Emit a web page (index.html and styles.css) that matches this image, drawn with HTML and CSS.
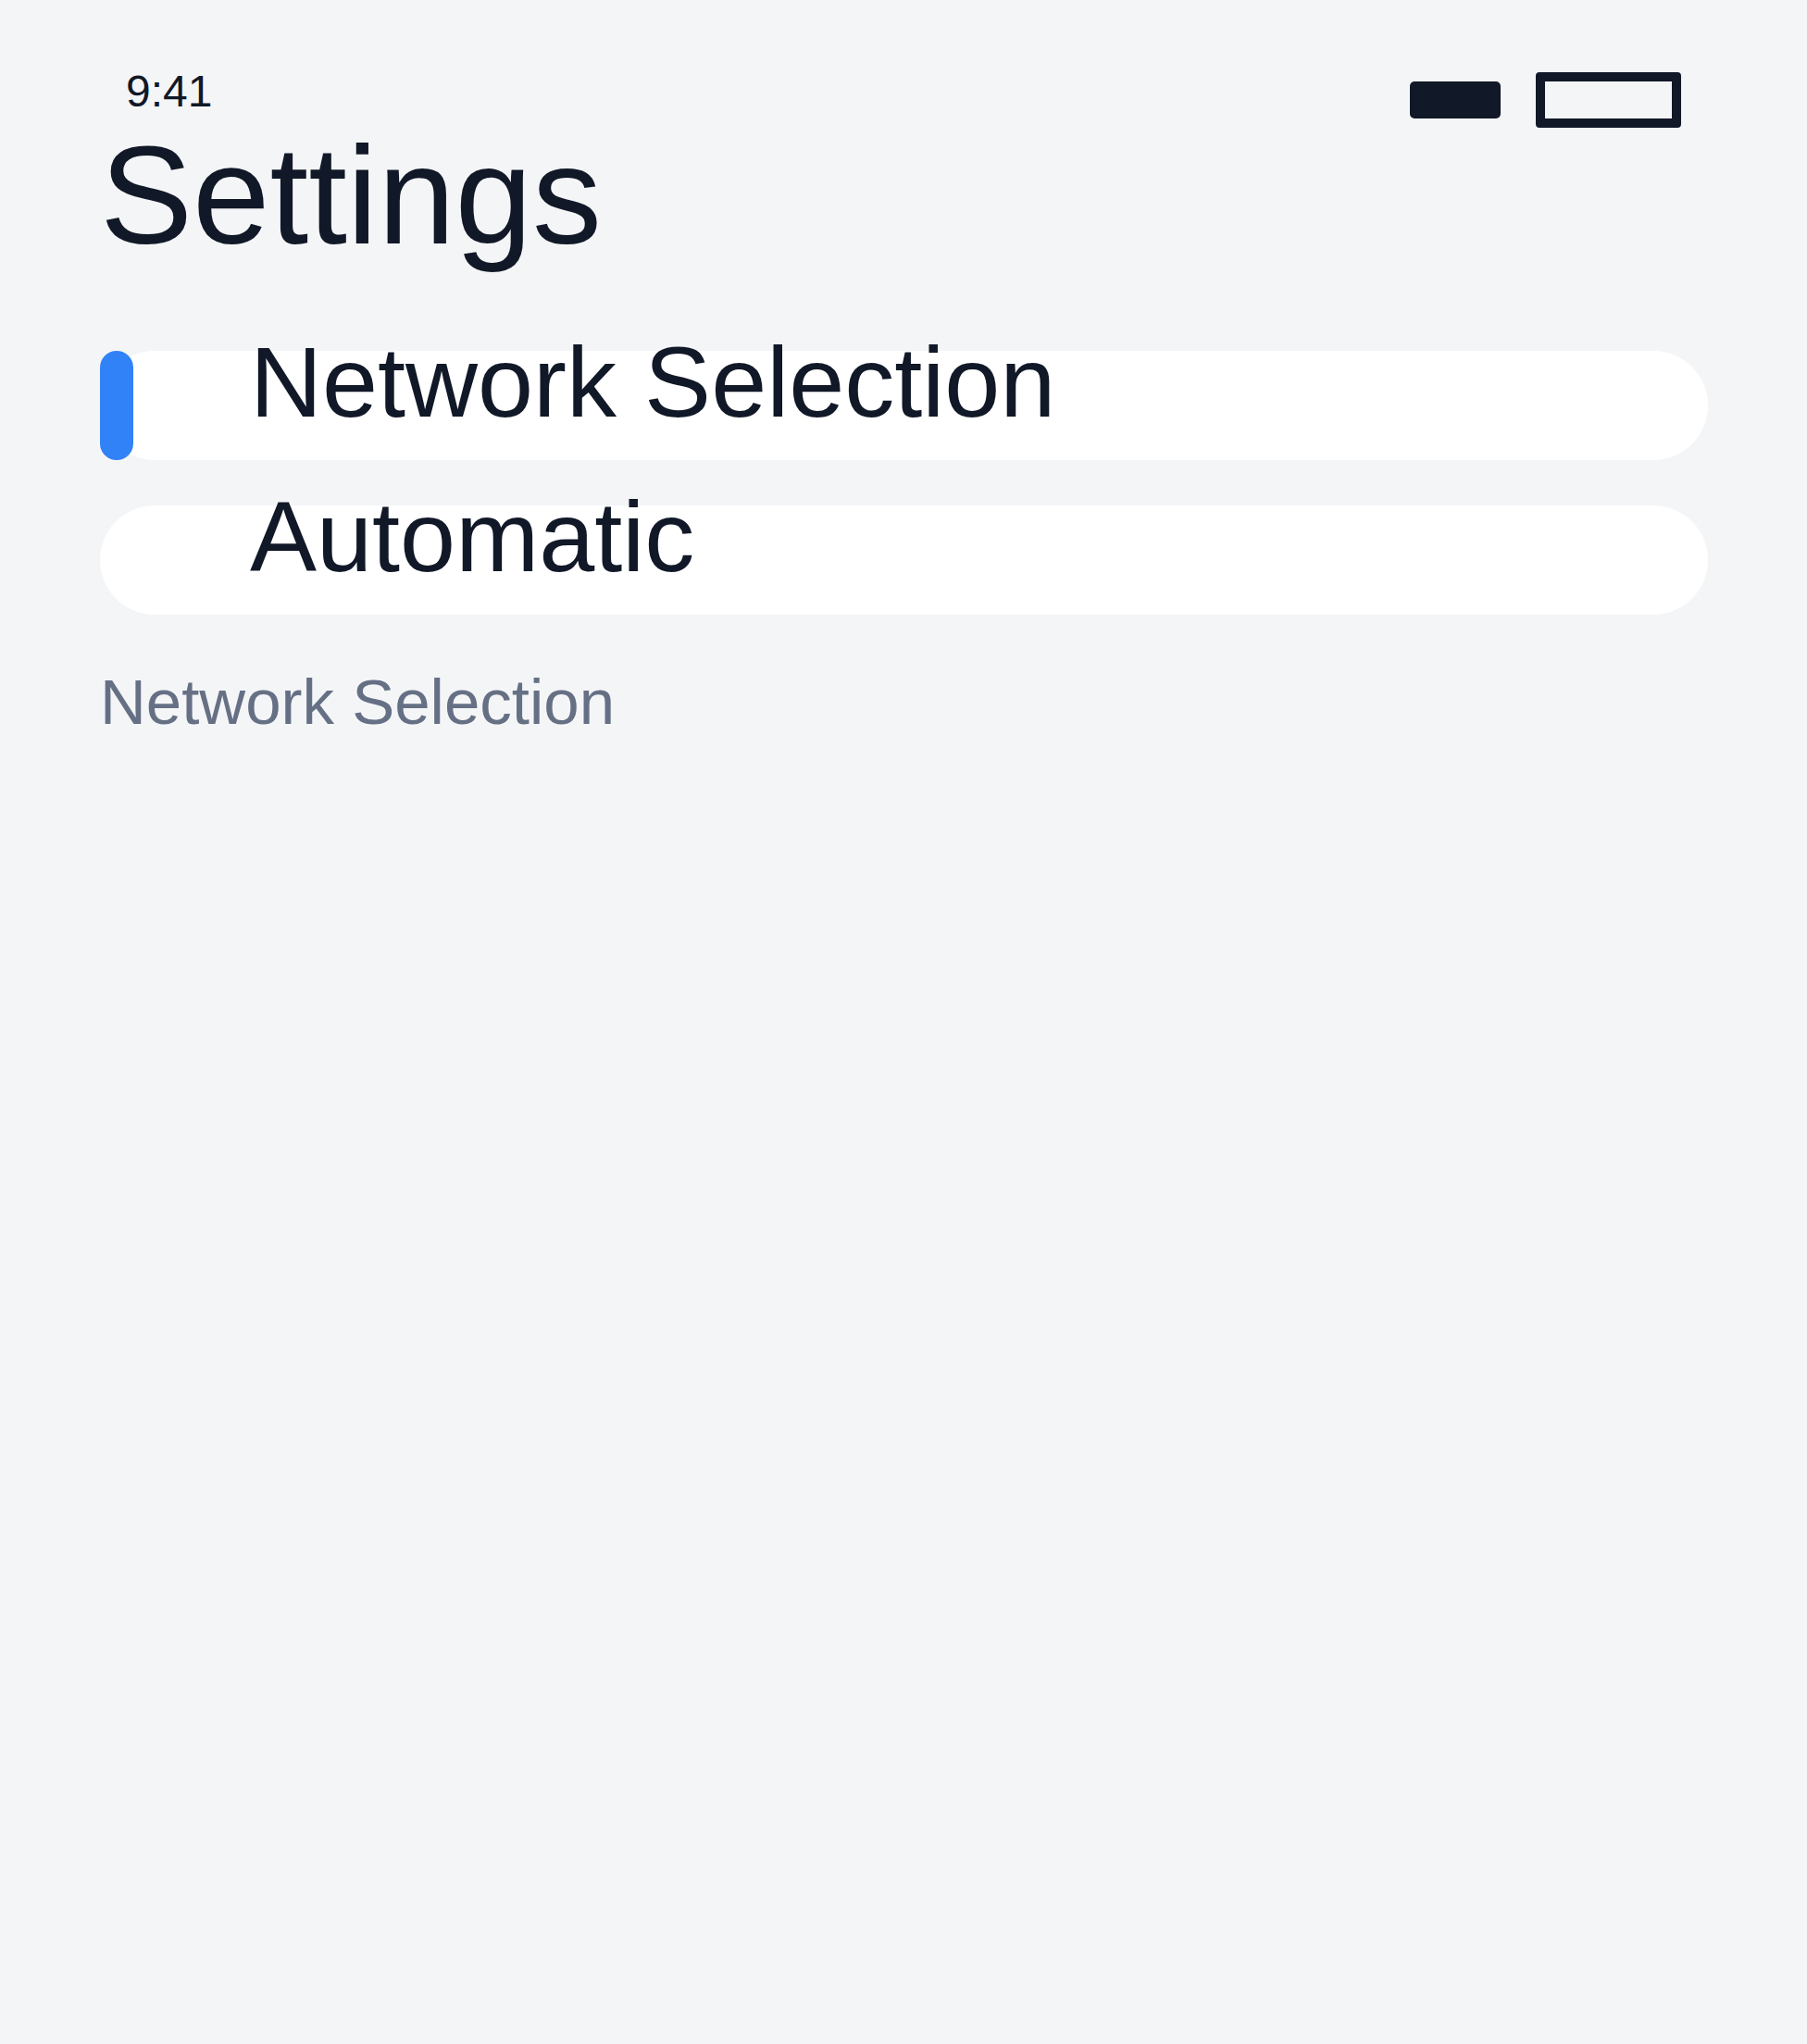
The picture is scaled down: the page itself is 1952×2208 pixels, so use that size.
FILE: index.html
```html
<!DOCTYPE html>
<html lang="en">
<head>
    <meta charset="UTF-8">
    <meta name="viewport" content="width=device-width, initial-scale=1.0">
    <title>Settings</title>
    <link rel="stylesheet" href="styles.css">
</head>
<body>
    <div class="screen">
        <div class="status-bar">
            <span class="time">9:41</span>
            <div class="status-icons">
                <span class="signal"></span>
                <span class="battery"></span>
            </div>
        </div>
        <h1 class="title">Settings</h1>
        <div class="list">
            <div class="row active">
                <span class="marker"></span>
                <span class="label">Network Selection</span>
            </div>
            <div class="row">
                <span class="label">Automatic</span>
            </div>
        </div>
        <p class="caption">Network Selection</p>
    </div>
</body>
</html>
```

FILE: styles.css
```css
body {
    margin: 0;
    background-color: #f4f5f7;
    color: #111827;
    font-family: "Liberation Sans", Arial, sans-serif;
}
.screen {
    padding: 71px 107px 0 108px;
}
.status-bar {
    display: flex;
    justify-content: space-between;
    align-items: flex-start;
    height: 54px;
    padding: 0 29px 0 28px;
}
.time {
    font-size: 48px;
    line-height: 55px;
}
.status-icons {
    display: flex;
    align-items: center;
    gap: 38px;
    margin-top: 7px;
}
.signal {
    width: 98px;
    height: 40px;
    background: #111827;
    border-radius: 5px;
}
.battery {
    width: 137px;
    height: 40px;
    border: 10px solid #111827;
    border-radius: 4px;
}
.title {
    margin: 0 0 82px;
    font-size: 150px;
    font-weight: normal;
    line-height: 172px;
}
.list {
    display: flex;
    flex-direction: column;
    gap: 49px;
}
.row {
    position: relative;
    display: flex;
    align-items: flex-start;
    height: 118px;
    padding-left: 162px;
    background: #fff;
    border-radius: 59px;
}
.marker {
    position: absolute;
    left: 0;
    top: 0;
    width: 36px;
    height: 100%;
    background: #3182f6;
    border-radius: 18px;
}
.label {
    margin-top: -20px;
    font-size: 108px;
    line-height: 108px;
    white-space: nowrap;
}
.caption {
    margin: 55px 0 0;
    font-size: 69px;
    color: #667085;
}
```
